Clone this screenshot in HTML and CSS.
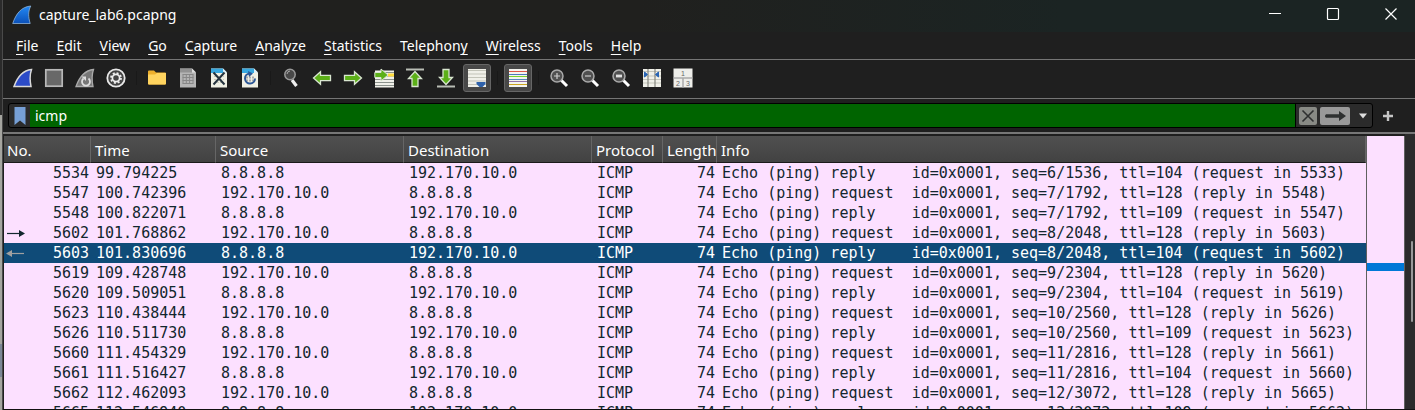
FILE: index.html
```html
<!DOCTYPE html>
<html lang="en">
<head>
<meta charset="utf-8">
<title>capture_lab6.pcapng</title>
<link rel="stylesheet" href="styles.css">
</head>
<body>
<div class="desktop">
<div class="behind"></div>
<div class="window">
<header class="titlebar">
  <svg class="logo" width="20" height="20" viewBox="0 0 20 20"><defs><linearGradient id="fin" x1="0" y1="0" x2="0" y2="1"><stop offset="0" stop-color="#2389f5"/><stop offset="1" stop-color="#0b50b8"/></linearGradient></defs><path d="M.7 18.500C4 9 9 1.800 18.800 1C16 6 16.200 12 18.200 18.500Z" fill="url(#fin)" stroke="#8fb4d8" stroke-width=".8"/></svg>
  <h1>capture_lab6.pcapng</h1>
  <div class="win-buttons">
    <button aria-label="Minimize"><svg width="14" height="14" viewBox="0 0 14 14"><path d="M1 6.500h12" stroke="#fff"/></svg></button>
    <button aria-label="Maximize"><svg width="14" height="14" viewBox="0 0 14 14"><rect x="1.500" y="1.500" width="11" height="11" rx="1" fill="none" stroke="#fff" stroke-width="1.200"/></svg></button>
    <button aria-label="Close"><svg width="14" height="14" viewBox="0 0 14 14"><path d="M1.500 1.500l11 11M12.500 1.500l-11 11" stroke="#fff" stroke-width="1.200"/></svg></button>
  </div>
</header>
<nav class="menubar">
  <button><u>F</u>ile</button><button><u>E</u>dit</button><button><u>V</u>iew</button><button><u>G</u>o</button><button><u>C</u>apture</button><button><u>A</u>nalyze</button><button><u>S</u>tatistics</button><button>Telephon<u>y</u></button><button><u>W</u>ireless</button><button><u>T</u>ools</button><button><u>H</u>elp</button>
</nav>
<div class="toolbar" role="toolbar">
  <button aria-label="Start capture"><svg width="20" height="20" viewBox="0 0 20 20"><path d="M1 18.500C4 10 9 2.500 18.500 1.500C16.500 7 16.700 12 18 18.500Z" fill="#2b4bc8" stroke="#d8d8d8" stroke-width="1.500"/></svg></button>
  <button aria-label="Stop capture"><svg width="20" height="20" viewBox="0 0 20 20"><rect x="1.800" y="1.800" width="16.400" height="16.400" fill="#686868" stroke="#b8b8b8" stroke-width="1.700"/></svg></button>
  <button aria-label="Restart capture"><svg width="20" height="20" viewBox="0 0 20 20"><path d="M1 18.500C4 10 9 2.500 18.500 1.500C16.500 7 16.700 12 18 18.500Z" fill="#777" stroke="#aaa" stroke-width="1.300"/><path d="M8.500 10.500A4 4 0 1 0 13.500 10.500" fill="none" stroke="#ddd" stroke-width="1.800"/><path d="M6.500 8.500h4.500v4.500z" fill="#ddd"/></svg></button>
  <button aria-label="Capture options"><svg width="20" height="20" viewBox="0 0 20 20"><circle cx="10" cy="10" r="8.700" fill="#444" stroke="#e8e8e8" stroke-width="1.800"/><circle cx="10" cy="10" r="5" fill="none" stroke="#eee" stroke-width="1.800" stroke-dasharray="2 1.927"/><circle cx="10" cy="10" r="3.600" fill="#444" stroke="#eee" stroke-width="1.700"/></svg></button>
  <span class="sep"></span>
  <button aria-label="Open"><svg width="20" height="20" viewBox="0 0 20 20"><path d="M1 3.500q0-1 1-1h5l2 2h9q1 0 1 1v10q0 1-1 1H2q-1 0-1-1z" fill="#eeb02c"/><path d="M1 6.500h7l2-1.500h9v10.500q0 1-1 1H2q-1 0-1-1z" fill="#ffd45f"/></svg></button>
  <button aria-label="Save"><svg width="20" height="20" viewBox="0 0 20 20"><path d="M2 .5h12l4 4v15H2z" fill="#b5b5b5"/><path d="M2 .5h12v4H2z" fill="#929292"/><path d="M14 .5v4h4z" fill="#ddd"/><path d="M4.500 6.500h11M4.500 9.500h11M4.500 12.500h11M4.500 15.500h11M5 6.500v9M8.300 6.500v9M11.600 6.500v9M15 6.500v9" stroke="#888"/></svg></button>
  <button aria-label="Close file"><svg width="20" height="20" viewBox="0 0 20 20"><path d="M2 .5h12l4 4v15H2z" fill="#f0f0e4"/><path d="M2 .5h12v4.500H2z" fill="#38a8df"/><path d="M14 .5v4h4z" fill="#d7eef9"/><path d="M5 8.500h10M5 11.500h10M5 14.500h10" stroke="#c8c8bc" stroke-dasharray="2 1"/><path d="M4.500 4.500l11 12M15.500 4.500l-11 12" stroke="#26343f" stroke-width="2"/></svg></button>
  <button aria-label="Reload"><svg width="20" height="20" viewBox="0 0 20 20"><path d="M2 .5h12l4 4v15H2z" fill="#f0f0e4"/><path d="M2 .5h12v4.500H2z" fill="#38a8df"/><path d="M14 .5v4h4z" fill="#d7eef9"/><path d="M6 9.500h8M6 12.500h8" stroke="#aaa" stroke-width="2" stroke-dasharray="2 1"/><path d="M9.500 5.500A5 5 0 1 0 15 10.500" fill="none" stroke="#2c5796" stroke-width="2"/><path d="M8 3l5 2.500-4 3.500z" fill="#2c5796"/></svg></button>
  <span class="sep"></span>
  <button aria-label="Find"><svg width="20" height="20" viewBox="0 0 20 20"><path d="M11 12l4.500 6" stroke="#eee" stroke-width="3.200"/><circle cx="9" cy="6.500" r="5.200" fill="#484848" stroke="#999" stroke-width="1.500"/><path d="M6 6q.5-3 3-3" fill="none" stroke="#aaa"/></svg></button>
  <button aria-label="Previous"><svg width="20" height="20" viewBox="0 0 20 20"><path d="M1.500 10l7-6.200v3.500h10v5.400h-10v3.500z" fill="#5cb018" stroke="#d9e6d0" stroke-width="1.300"/></svg></button>
  <button aria-label="Next"><svg width="20" height="20" viewBox="0 0 20 20"><path d="M18.500 10l-7-6.200v3.500h-10v5.400h10v3.500z" fill="#5cb018" stroke="#d9e6d0" stroke-width="1.300"/></svg></button>
  <button aria-label="Go to packet"><svg width="20" height="20" viewBox="0 0 20 20"><path d="M1 2.500h19v17H1z" fill="#f1f1ea"/><path d="M1 4.500h19M1 8h19M1 11.500h19M1 14.500h19M1 17.500h19" stroke="#8b928c"/><path d="M14 5.500h6v3h-6z" fill="#ffdc3c"/><path d="M.8 4.500h6.200v-3.500l7 6-7 6V9.500H.8z" fill="#5cb018" stroke="#d9e6d0"/></svg></button>
  <button aria-label="First packet"><svg width="20" height="20" viewBox="0 0 20 20"><path d="M1 1.500h18" stroke="#b9bdb5" stroke-width="2"/><path d="M10 3.500l6.500 7H13v8H7v-8H3.500z" fill="#5cb018" stroke="#d9e6d0" stroke-width="1.300"/></svg></button>
  <button aria-label="Last packet"><svg width="20" height="20" viewBox="0 0 20 20"><path d="M1 18.500h18" stroke="#b9bdb5" stroke-width="2"/><path d="M10 16.500l6.500-7H13v-8H7v8H3.500z" fill="#5cb018" stroke="#d9e6d0" stroke-width="1.300"/></svg></button>
  <button class="on" aria-label="Auto scroll" aria-pressed="true"><svg width="20" height="20" viewBox="0 0 20 20"><path d="M1 1h18v18H1z" fill="#f0f0e9"/><path d="M1 2.500h18M1 6h18M1 9.500h18M1 13h18M1 16.500h18" stroke="#c3c4b9"/><path d="M9.500 14h9v2l-3 3h-3l-3-3z" fill="#2f62ab"/></svg></button>
  <span class="sep"></span>
  <button class="on" aria-label="Colorize" aria-pressed="true"><svg width="20" height="20" viewBox="0 0 20 20"><path d="M1 1h18v18H1z" fill="#f4f4ef"/><path d="M1 3.500h18" stroke="#e05848"/><path d="M1 6.500h18" stroke="#4c79bd"/><path d="M1 8.500h18" stroke="#75d52e"/><path d="M1 11.500h18" stroke="#5688bd"/><path d="M1 13.500h18" stroke="#9273a8"/><path d="M1 16.500h18" stroke="#cda51f"/></svg></button>
  <span class="sep"></span>
  <button aria-label="Zoom in"><svg width="20" height="20" viewBox="0 0 20 20"><path d="M12 12l6 6" stroke="#fff" stroke-width="3"/><circle cx="8" cy="8" r="6" fill="#505050" stroke="#aaa" stroke-width="1.500"/><path d="M5 8h6M8 5v6" stroke="#ccc" stroke-width="1.200"/></svg></button>
  <button aria-label="Zoom out"><svg width="20" height="20" viewBox="0 0 20 20"><path d="M12 12l6 6" stroke="#fff" stroke-width="3"/><circle cx="8" cy="8" r="6" fill="#505050" stroke="#aaa" stroke-width="1.500"/><path d="M5 8h6" stroke="#ccc" stroke-width="1.200"/></svg></button>
  <button aria-label="Normal size"><svg width="20" height="20" viewBox="0 0 20 20"><path d="M12 12l6 6" stroke="#fff" stroke-width="3"/><circle cx="8" cy="8" r="6" fill="#505050" stroke="#aaa" stroke-width="1.500"/><path d="M5 8h6" stroke="#ddd" stroke-width="2.800"/></svg></button>
  <button aria-label="Resize columns"><svg width="20" height="20" viewBox="0 0 20 20"><path d="M1 1h18v18H1z" fill="#f0f0e9"/><path d="M1 3.500h18M1 8h18M1 11.500h18M1 15h18" stroke="#c5c6bb"/><path d="M6 1v18M13 1v18" stroke="#85867f" stroke-width="1.200"/><path d="M2.500 4l3 2.500-3 2.500zM16.500 4l-3 2.500 3 2.500z" fill="#2864b4" stroke="#2864b4"/></svg></button>
  <button aria-label="Layout"><svg width="20" height="20" viewBox="0 0 20 20"><path d="M.5.500h19v19H.5z" fill="#eeeeea"/><path d="M.5 10h19M10 10v9.500" stroke="#aaa" stroke-width="1.500"/><g font-family="Liberation Sans, sans-serif" font-size="7" fill="#666" text-anchor="middle"><text x="10" y="8">1</text><text x="5" y="17.500">2</text><text x="15" y="17.500">3</text></g></svg></button>
</div>
<form class="filter" onsubmit="return false">
  <div class="filter-box">
    <button type="button" class="bookmark" aria-label="Bookmarks"><svg width="12" height="20" viewBox="0 0 12 20"><path d="M.5 1h11v18L6 14.500.5 19z" fill="#769fd5"/></svg></button>
    <input class="filter-input" type="text" aria-label="Display filter" value="icmp">
    <button type="button" class="clear" aria-label="Clear"><svg width="18" height="18" viewBox="0 0 18 18"><rect width="18" height="18" rx="2" fill="#888a85"/><path d="M3.500 3.500l11 11M14.500 3.500l-11 11" stroke="#2e3030" stroke-width="1.600"/></svg></button>
    <button type="button" class="apply" aria-label="Apply"><svg width="30" height="18" viewBox="0 0 30 18"><rect width="30" height="18" rx="2" fill="#999"/><path d="M6 7.200h13V4l7 5-7 5v-3.200H6q-2-1.800 0-3.600z" fill="#2e3030"/></svg></button>
    <button type="button" class="history" aria-label="Recent filters"><svg width="8" height="6" viewBox="0 0 8 6"><path d="M0 .5h8L4 5.500z" fill="#ddd"/></svg></button>
  </div>
  <button type="button" class="add" aria-label="Add filter"><svg width="10" height="10" viewBox="0 0 10 10"><path d="M0 5h10M5 0v10" stroke="#c5c5c5" stroke-width="2.400"/></svg></button>
</form>
<main class="packets">
<div class="list">
<table>
<colgroup><col class="c-no"><col class="c-time"><col class="c-addr"><col class="c-addr"><col class="c-proto"><col class="c-len"><col></colgroup>
<thead><tr><th>No.</th><th>Time</th><th>Source</th><th>Destination</th><th>Protocol</th><th>Length</th><th>Info</th></tr></thead>
<tbody>
<tr><td>5534</td><td>99.794225</td><td>8.8.8.8</td><td>192.170.10.0</td><td>ICMP</td><td>74</td><td>Echo (ping) reply    id=0x0001, seq=6/1536, ttl=104 (request in 5533)</td></tr>
<tr><td>5547</td><td>100.742396</td><td>192.170.10.0</td><td>8.8.8.8</td><td>ICMP</td><td>74</td><td>Echo (ping) request  id=0x0001, seq=7/1792, ttl=128 (reply in 5548)</td></tr>
<tr><td>5548</td><td>100.822071</td><td>8.8.8.8</td><td>192.170.10.0</td><td>ICMP</td><td>74</td><td>Echo (ping) reply    id=0x0001, seq=7/1792, ttl=109 (request in 5547)</td></tr>
<tr><td><svg class="mark" width="20" height="20" viewBox="0 0 20 20"><path d="M1 10.500h13" stroke="#12272e" stroke-width="1.200"/><path d="M13 7l6 3.500-6 3.500z" fill="#12272e"/></svg>5602</td><td>101.768862</td><td>192.170.10.0</td><td>8.8.8.8</td><td>ICMP</td><td>74</td><td>Echo (ping) request  id=0x0001, seq=8/2048, ttl=128 (reply in 5603)</td></tr>
<tr class="selected"><td><svg class="mark" width="20" height="20" viewBox="0 0 20 20"><path d="M5 10.500h13" stroke="#a0a0a0" stroke-width="1.200"/><path d="M6 7l-6 3.500 6 3.500z" fill="#a0a0a0"/></svg>5603</td><td>101.830696</td><td>8.8.8.8</td><td>192.170.10.0</td><td>ICMP</td><td>74</td><td>Echo (ping) reply    id=0x0001, seq=8/2048, ttl=104 (request in 5602)</td></tr>
<tr><td>5619</td><td>109.428748</td><td>192.170.10.0</td><td>8.8.8.8</td><td>ICMP</td><td>74</td><td>Echo (ping) request  id=0x0001, seq=9/2304, ttl=128 (reply in 5620)</td></tr>
<tr><td>5620</td><td>109.509051</td><td>8.8.8.8</td><td>192.170.10.0</td><td>ICMP</td><td>74</td><td>Echo (ping) reply    id=0x0001, seq=9/2304, ttl=104 (request in 5619)</td></tr>
<tr><td>5623</td><td>110.438444</td><td>192.170.10.0</td><td>8.8.8.8</td><td>ICMP</td><td>74</td><td>Echo (ping) request  id=0x0001, seq=10/2560, ttl=128 (reply in 5626)</td></tr>
<tr><td>5626</td><td>110.511730</td><td>8.8.8.8</td><td>192.170.10.0</td><td>ICMP</td><td>74</td><td>Echo (ping) reply    id=0x0001, seq=10/2560, ttl=109 (request in 5623)</td></tr>
<tr><td>5660</td><td>111.454329</td><td>192.170.10.0</td><td>8.8.8.8</td><td>ICMP</td><td>74</td><td>Echo (ping) request  id=0x0001, seq=11/2816, ttl=128 (reply in 5661)</td></tr>
<tr><td>5661</td><td>111.516427</td><td>8.8.8.8</td><td>192.170.10.0</td><td>ICMP</td><td>74</td><td>Echo (ping) reply    id=0x0001, seq=11/2816, ttl=104 (request in 5660)</td></tr>
<tr><td>5662</td><td>112.462093</td><td>192.170.10.0</td><td>8.8.8.8</td><td>ICMP</td><td>74</td><td>Echo (ping) request  id=0x0001, seq=12/3072, ttl=128 (reply in 5665)</td></tr>
<tr><td>5665</td><td>112.546940</td><td>8.8.8.8</td><td>192.170.10.0</td><td>ICMP</td><td>74</td><td>Echo (ping) reply    id=0x0001, seq=12/3072, ttl=109 (request in 5662)</td></tr>
</tbody>
</table>
</div>
<div class="minimap"><div class="minimap-row"></div></div>
<div class="gutter"><div class="thumb"></div></div>
</main>
</div>
</div>
</body>
</html>
```
FILE: styles.css
```css
* { box-sizing: border-box; }

body {
  margin: 0;
  background: #1f1f1f;
  color: #fff;
  font: 14px/20px "Noto Sans", "Open Sans", sans-serif;
}

button {
  padding: 0;
  border: 0;
  background: none;
  color: inherit;
  font: inherit;
}

svg { display: block; }

.desktop {
  display: flex;
  height: 100vh;
  overflow: hidden;
}

.behind {
  width: 3px;
  background: linear-gradient(#2b2b2b 0 28%, #a5a5a0 28% 84%, #7c8796 84% 92%, #a5a5a0 92%);
  border-right: 1px solid #4a4a4a;
}

.window {
  flex: 1;
  min-width: 0;
  display: flex;
  flex-direction: column;
  border-bottom: 1px solid #111;
}

.titlebar {
  display: flex;
  align-items: center;
  height: 32px;
  padding-left: 9px;
  gap: 7px;
  background: linear-gradient(90deg, #20201e 0 45%, #1b2423 75%);
}

.logo { margin-bottom: 3px; }

h1 {
  flex: 1;
  margin: 0;
  padding-bottom: 3px;
  font-size: 14px;
  font-weight: 400;
}

.win-buttons {
  display: flex;
  padding: 0 0 4px;
  margin-right: -5px;
}

.win-buttons button {
  width: 58px;
  display: grid;
  place-items: center;
}

.menubar {
  display: flex;
  gap: 18px;
  height: 28px;
  padding: 4px 13px;
  border-bottom: 1px solid #757575;
}

.menubar u { text-underline-offset: 3px; }

.toolbar {
  display: flex;
  align-items: center;
  height: 39px;
  padding: 0 0 2px 4px;
  border-bottom: 1px solid #757575;
}

.toolbar button {
  width: 31px;
  height: 28px;
  display: grid;
  place-items: center;
}

.toolbar .on {
  width: 28px;
  margin: 0 1px 0 2px;
  border: 1px solid #666;
  border-radius: 3px;
  background: #484848;
}

.sep {
  width: 10px;
  height: 14px;
  background: linear-gradient(#191919, #191919) center / 1px 100% no-repeat;
}

.filter {
  display: flex;
  align-items: center;
  height: 33px;
  padding: 0 22px 0 5px;
  gap: 10px;
}

.filter-box {
  flex: 1;
  display: flex;
  align-items: center;
  height: 25px;
  border: 1px solid #000;
  border-radius: 3px;
  background: #2b2b2b;
}

.bookmark {
  width: 21px;
  display: grid;
  place-items: center;
}

.filter-input {
  flex: 1;
  min-width: 0;
  height: 23px;
  margin-right: 3px;
  padding: 0 5px;
  border: 0;
  border-right: 1px solid #000;
  border-radius: 0;
  background: #006400;
  color: #fff;
  font: inherit;
}

.apply { margin-left: 3px; }

.history {
  width: 22px;
  padding-left: 4px;
  display: grid;
  place-items: center;
}

.packets {
  flex: 1;
  min-height: 0;
  display: flex;
  padding-left: 1px;
  border-top: 2px solid #777;
}

.list {
  flex: 1;
  min-width: 0;
  padding-top: 2px;
  overflow: hidden;
}

table {
  width: 100%;
  border-collapse: separate;
  border-spacing: 0;
  table-layout: fixed;
  background: #fce0ff;
}

.c-no { width: 87px; }
.c-time { width: 125px; }
.c-addr { width: 188px; }
.c-proto { width: 71px; }
.c-len { width: 54px; }

th {
  height: 27px;
  padding: 1px 0 0 4px;
  border-right: 1px solid #666;
  border-bottom: 1px solid #1a1a1a;
  background: linear-gradient(#505050, #424242);
  font: 15px/24px "Noto Sans", "Open Sans", sans-serif;
  text-align: left;
  white-space: nowrap;
}

th:first-child { padding-left: 3px; }

td {
  height: 20px;
  padding: 0 0 0 5px;
  color: #12272e;
  font: 15px/20px "DejaVu Sans Mono", monospace;
  white-space: pre;
}

td:nth-child(1) {
  padding: 0 2px;
  text-align: right;
}

td:nth-child(6) {
  padding: 0 2px 0 0;
  text-align: right;
}

.mark { float: left; }

.selected td {
  background: #0f4b78;
  color: #fff;
}

.minimap {
  width: 39px;
  margin-top: 2px;
  padding-top: 127px;
  border: solid #606060;
  border-width: 0 1px;
  background: #fce0ff;
}

.minimap-row {
  height: 8px;
  background: #0078d7;
}

.gutter {
  width: 10px;
  padding: 107px 2px 0 6px;
  background: #2b2b2b;
}

.thumb {
  width: 2px;
  height: 81px;
  border-radius: 1px;
  background: #999;
}
```
